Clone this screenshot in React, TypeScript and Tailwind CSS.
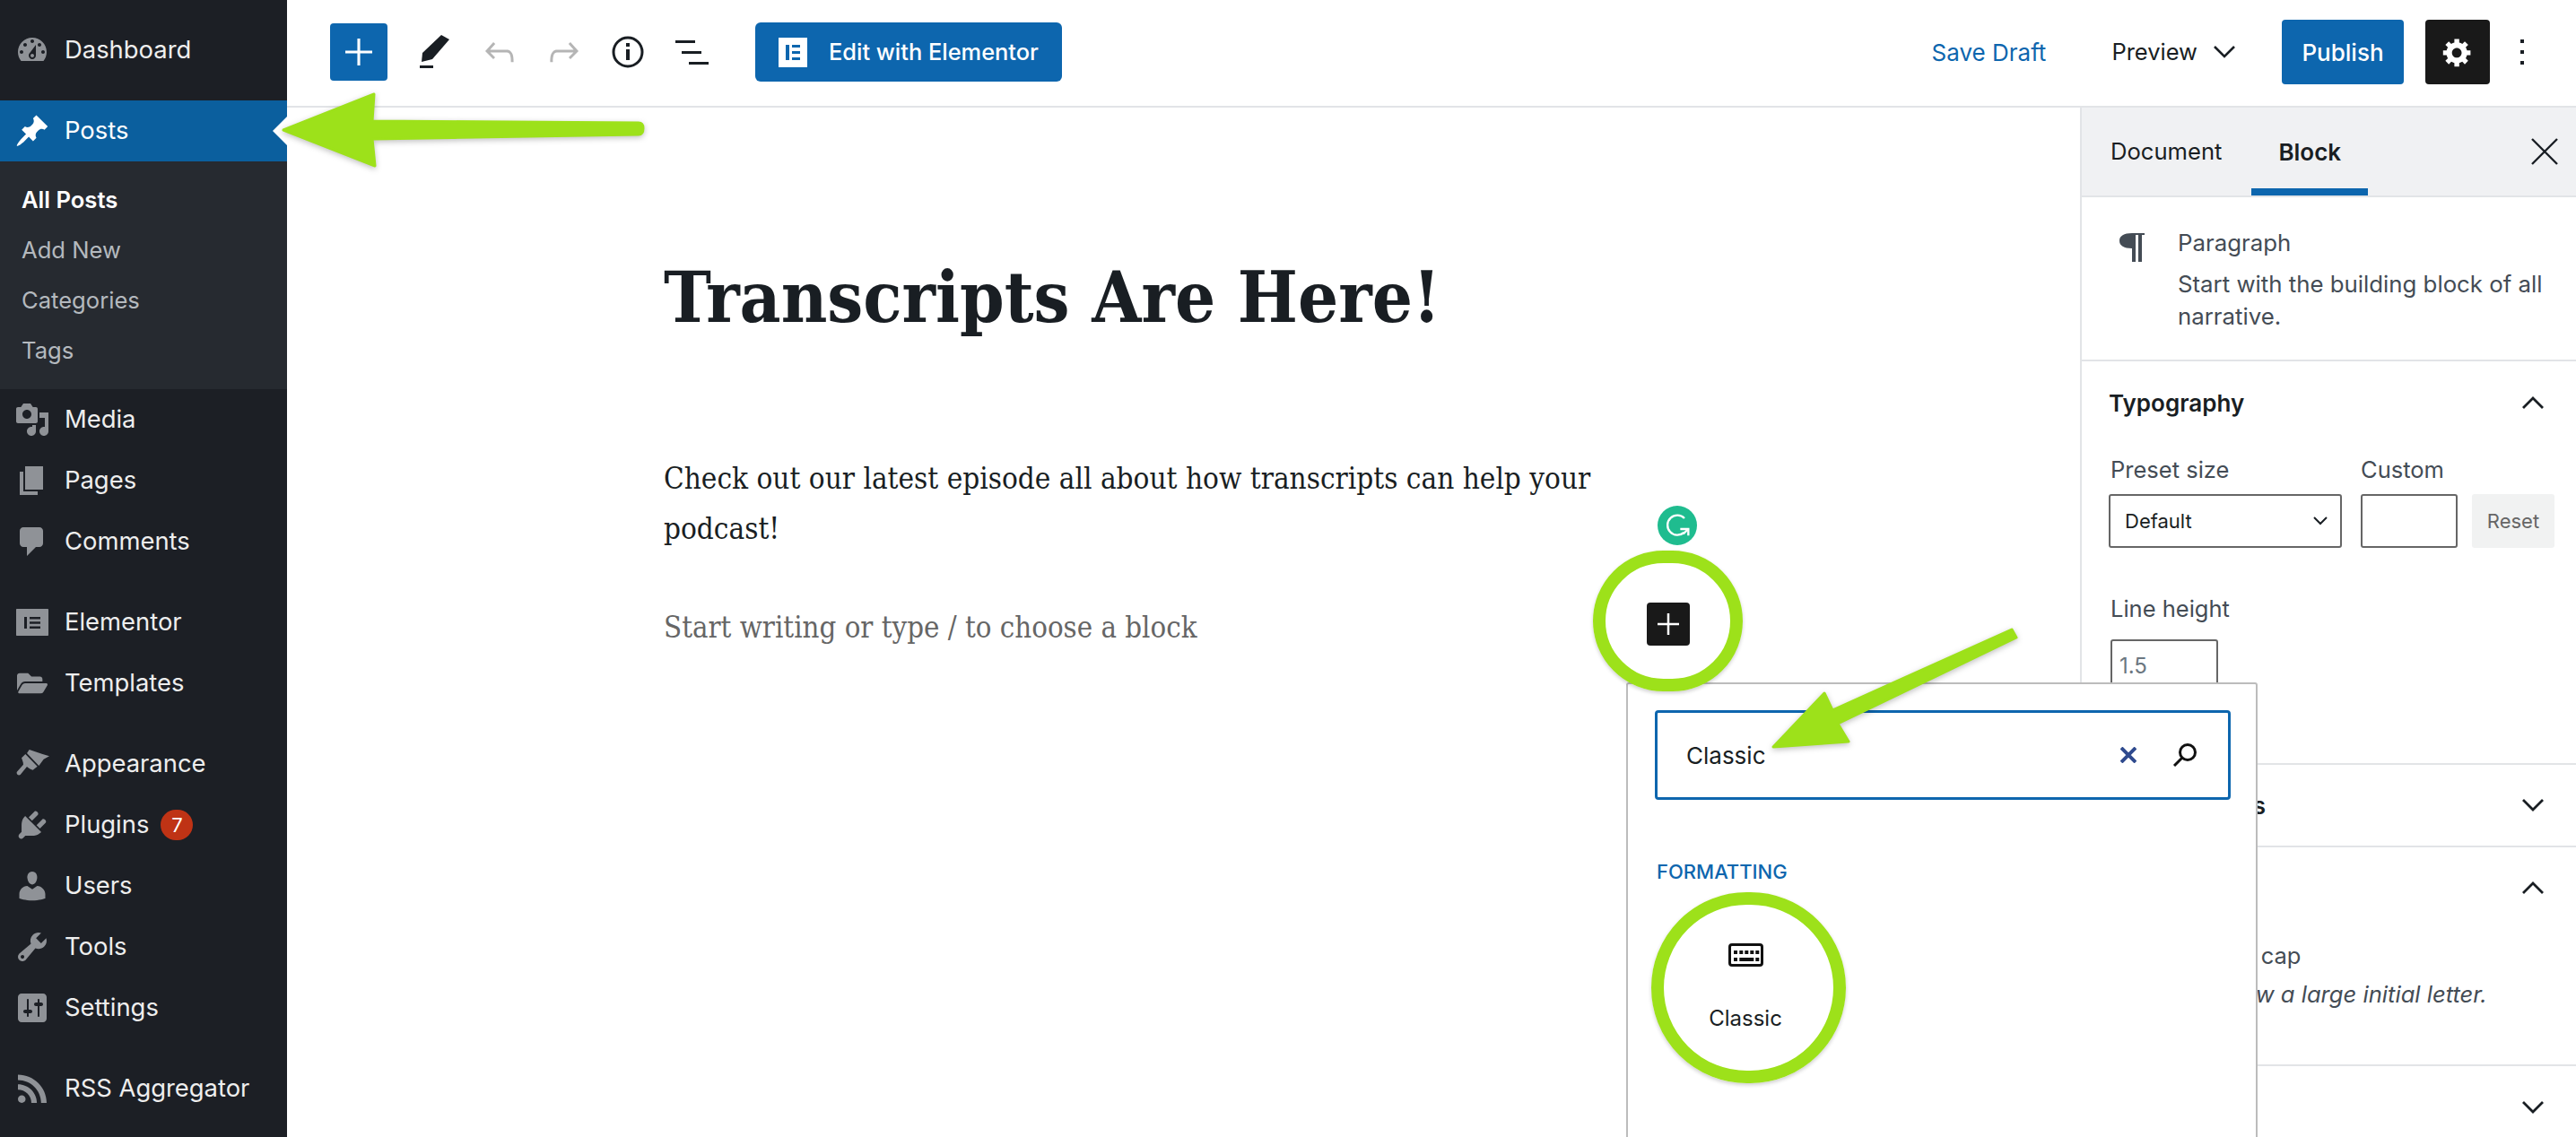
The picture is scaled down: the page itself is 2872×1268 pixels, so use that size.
import React, { FC } from "react";
import { FaFolderOpen } from "react-icons/fa";

const GREEN = "#9de11a";

// dashicons, 20 unit box
const ICONS: Record<string, string> = {
  dashboard:
    "M3.76 16h12.48c1.1-1.37 1.76-3.11 1.76-5 0-4.42-3.58-8-8-8s-8 3.58-8 8c0 1.89.66 3.63 1.76 5zM10 4c.55 0 1 .45 1 1s-.45 1-1 1-1-.45-1-1 .45-1 1-1zM6 6c.55 0 1 .45 1 1s-.45 1-1 1-1-.45-1-1 .45-1 1-1zm8 0c.55 0 1 .45 1 1s-.45 1-1 1-1-.45-1-1 .45-1 1-1zm-5.37 5.55L12 7v6c0 1.1-.9 2-2 2s-2-.9-2-2c0-.57.24-1.08.63-1.45zM4 10c.55 0 1 .45 1 1s-.45 1-1 1-1-.45-1-1 .45-1 1-1zm12 0c.55 0 1 .45 1 1s-.45 1-1 1-1-.45-1-1 .45-1 1-1zm-5 3c0-.55-.45-1-1-1s-1 .45-1 1 .45 1 1 1 1-.45 1-1z",
  pin: "M10.44 3.02l1.82-1.82 6.36 6.35-1.83 1.82c-1.05-.68-2.48-.57-3.41.36l-.75.75c-.92.93-1.04 2.35-.35 3.41l-1.83 1.82-2.41-2.41-2.8 2.79c-.42.42-3.38 2.71-3.8 2.29s1.86-3.39 2.28-3.81l2.79-2.79L4.1 9.36l1.83-1.82c1.05.69 2.48.57 3.4-.36l.75-.75c.93-.92 1.05-2.35.36-3.41z",
  media:
    "M13 11V4c0-.55-.45-1-1-1h-1.67L9 1H5L3.67 3H2c-.55 0-1 .45-1 1v7c0 .55.45 1 1 1h10c.55 0 1-.45 1-1zM7 4.5c1.38 0 2.5 1.12 2.5 2.5S8.38 9.5 7 9.5 4.5 8.38 4.5 7 5.62 4.5 7 4.5zM14 6h5v10.5c0 1.38-1.12 2.5-2.5 2.5S14 17.88 14 16.5s1.12-2.5 2.5-2.5c.17 0 .34.02.5.05V9h-3V6zm-4 8.05V13h2v3.5c0 1.38-1.12 2.5-2.5 2.5S7 17.88 7 16.5 8.12 14 9.5 14c.17 0 .34.02.5.05z",
  pages: "M6 15V2h10v13H6zm-1 1h8v2H3V5h2v11z",
  comments: "M5 2h9c1.1 0 2 .9 2 2v7c0 1.1-.9 2-2 2h-2l-5 5v-5H5c-1.1 0-2-.9-2-2V4c0-1.1.9-2 2-2z",
  elementor:
    "M1.5 2.500h17c.3 0 .5.2.5.5v14c0 .3-.2.5-.5.5h-17c-.3 0-.5-.2-.5-.5V3c0-.3.2-.5.5-.5zM5.500 7v6.500h1.500V7zM8.500 7v1.300H14.500V7zM8.500 9.600v1.300H14.500V9.600zM8.500 12.200v1.300H14.500v-1.300z",
  plugins:
    "M13.11 4.36L9.87 7.6 8 5.73l3.24-3.24c.35-.34 1.05-.2 1.56.32.52.51.66 1.21.31 1.55zm-8 1.77l.91-1.12 9.01 9.01-1.19.84c-.71.71-2.63 1.16-3.82 1.16H6.14L4.9 17.26c-.59.59-1.54.59-2.12 0-.59-.58-.59-1.53 0-2.12l1.24-1.24v-3.88c0-1.13.4-3.19 1.09-3.89zm7.26 3.97l3.24-3.24c.34-.35 1.04-.21 1.55.31.52.51.66 1.21.31 1.55l-3.24 3.25z",
  users:
    "M10 9.25c-2.27 0-2.73-3.44-2.73-3.44C7 4.02 7.82 2 9.97 2c2.16 0 2.98 2.02 2.71 3.81 0 0-.41 3.44-2.68 3.44zm0 2.57L12.72 10c2.39 0 4.52 2.33 4.52 4.53v2.49s-3.65 1.13-7.24 1.13c-3.65 0-7.24-1.13-7.24-1.13v-2.49c0-2.25 1.94-4.48 4.47-4.48z",
  tools:
    "M16.68 9.77c-1.34 1.34-3.3 1.67-4.95.99l-5.41 6.52c-.99.99-2.59.99-3.58 0s-.99-2.59 0-3.57l6.52-5.42c-.68-1.65-.35-3.61.99-4.95 1.28-1.28 3.12-1.62 4.72-1.06l-2.89 2.89 2.82 2.82 2.86-2.87c.53 1.58.18 3.39-1.08 4.65zM3.81 16.21c.4.39 1.04.39 1.43 0 .4-.4.4-1.04 0-1.43-.39-.4-1.03-.4-1.43 0-.39.39-.39 1.03 0 1.43z",
  settings:
    "M18 16V4c0-1.1-.9-2-2-2H4c-1.1 0-2 .9-2 2v12c0 1.1.9 2 2 2h12c1.1 0 2-.9 2-2zM8 11h1c.55 0 1 .45 1 1s-.45 1-1 1H8v1.5c0 .28-.22.5-.5.5s-.5-.22-.5-.5V13H6c-.55 0-1-.45-1-1s.45-1 1-1h1V5.5c0-.28.22-.5.5-.5s.5.22.5.5V11zm5-2h-1c-.55 0-1-.45-1-1s.45-1 1-1h1V5.5c0-.28.22-.5.5-.5s.5.22.5.5V7h1c.55 0 1 .45 1 1s-.45 1-1 1h-1v5.5c0 .28-.22.5-.5.5s-.5-.22-.5-.5V9z",
  rss: "M14.92 18H18C18 9.32 10.82 2.25 2 2.25v3.02c7.12 0 12.92 5.71 12.92 12.73zm-5.44 0h3.08C12.56 12.27 7.82 7.6 2 7.6v3.02c2 0 3.87.77 5.29 2.16C8.7 14.17 9.48 16.03 9.48 18zm-5.35-.02c1.17 0 2.13-.93 2.13-2.09 0-1.15-.96-2.09-2.13-2.09-1.18 0-2.13.94-2.13 2.09 0 1.16.95 2.09 2.13 2.09z",
  gear: "M18 12h-2.18c-.17.7-.44 1.35-.81 1.93l1.54 1.54-2.1 2.1-1.54-1.54c-.58.36-1.23.63-1.91.79V19H8v-2.18c-.68-.16-1.33-.43-1.91-.79l-1.54 1.54-2.12-2.12 1.54-1.54c-.36-.58-.63-1.23-.79-1.91H1V9.03h2.17c.16-.7.44-1.35.8-1.94L2.43 5.55l2.1-2.1 1.54 1.54c.58-.37 1.24-.64 1.93-.81V2h3v2.18c.68.16 1.33.43 1.91.79l1.54-1.54 2.12 2.12-1.54 1.54c.36.59.64 1.24.8 1.94H18V12zm-8.5 1.5c1.66 0 3-1.34 3-3s-1.34-3-3-3-3 1.34-3 3 1.34 3 3 3z",
};

const Dash: FC<{ name: string; className?: string }> = ({ name, className }) => (
  <svg viewBox="0 0 20 20" fill="currentColor" fillRule="evenodd" className={className}>
    <path d={ICONS[name]} />
  </svg>
);

const BrushIcon = () => (
  <svg viewBox="18 6 120 120" fill="currentColor" className="h-10 w-10">
    <path d="M68 18L110 32L135 40L116 50L100 72L60 30Z" />
    <path d="M55 33L95 74L80 86C70 84 65 78 60 75L38 102C32 106 24 100 26 93L48 68C48 60 44 52 42 46Z" />
  </svg>
);

const MenuIcon: FC<{ icon: string }> = ({ icon }) => {
  if (icon === "folder") return <FaFolderOpen className="h-[34px] w-[34px]" />;
  if (icon === "appearance") return <BrushIcon />;
  return <Dash name={icon} className="h-10 w-10" />;
};

const MenuRow: FC<{ icon: string; label: string; badge?: string; gap?: boolean }> = ({ icon, label, badge, gap }) => (
  <div className={`flex h-[68px] items-center pl-4 text-[27.4px] text-[#eeeeee] ${gap ? "mt-[22px]" : ""}`}>
    <span className="flex h-10 w-10 items-center justify-center text-[#8f9297]">
      <MenuIcon icon={icon} />
    </span>
    <span className="ml-4">{label}</span>
    {badge && (
      <span className="ml-[13px] flex h-[34px] w-9 items-center justify-center rounded-full bg-[#bf3315] text-[22px] leading-none text-white">
        {badge}
      </span>
    )}
  </div>
);

const Sidebar = () => (
  <aside className="h-full w-[320px] shrink-0 bg-[#1c1f25]">
    <div className="flex h-[112px] items-center pl-4 text-[27.4px] text-[#eeeeee]">
      <Dash name="dashboard" className="h-10 w-10 text-[#8f9297]" />
      <span className="ml-4">Dashboard</span>
    </div>
    <div className="flex h-[68px] items-center bg-[#0b5f9e] pl-4 text-[27.4px] text-white">
      <Dash name="pin" className="h-10 w-10" />
      <span className="ml-4">Posts</span>
    </div>
    <div className="h-[254px] bg-[#262a30] pt-[15px] pl-6 text-[25.6px] text-[#b4b9be]">
      <div className="flex h-14 items-center font-semibold text-white">All Posts</div>
      <div className="flex h-14 items-center">Add New</div>
      <div className="flex h-14 items-center">Categories</div>
      <div className="flex h-14 items-center">Tags</div>
    </div>
    <MenuRow icon="media" label="Media" />
    <MenuRow icon="pages" label="Pages" />
    <MenuRow icon="comments" label="Comments" />
    <MenuRow icon="elementor" label="Elementor" gap />
    <MenuRow icon="folder" label="Templates" />
    <MenuRow icon="appearance" label="Appearance" gap />
    <MenuRow icon="plugins" label="Plugins" badge="7" />
    <MenuRow icon="users" label="Users" />
    <MenuRow icon="tools" label="Tools" />
    <MenuRow icon="settings" label="Settings" />
    <MenuRow icon="rss" label="RSS Aggregator" gap />
  </aside>
);

const Plus: FC<{ size: number; width?: number }> = ({ size, width = 2.5 }) => (
  <svg width={size} height={size} viewBox="0 0 24 24" stroke="#fff" strokeWidth={width}>
    <path d="M12 0v24M0 12h24" />
  </svg>
);

const UNDO =
  "M18.3 11.7c-.6-.6-1.4-.9-2.3-.9H6.7l2.9-3.3-1.1-1-4.5 5L8.5 16l1-1-2.7-2.7H16c.5 0 .9.2 1.3.5 1 1 1 3.4 1 4.5v.3h1.5v-.2c0-1.5 0-4.3-1.5-5.7z";

const TopBar = () => (
  <header className="flex h-[120px] shrink-0 items-center border-b-2 border-[#e2e4e7] pb-[2px] pl-12 pr-[58px]">
    <button className="flex h-16 w-16 items-center justify-center rounded bg-[#0d66ae]">
      <Plus size={30} />
    </button>
    <svg viewBox="0 0 33 38" className="ml-9 h-[38px] w-[33px]" fill="#191e23">
      <path d="M24 0l9 5-19 22-12 3 1-10z" />
      <rect x="0" y="34" width="15" height="3" />
    </svg>
    <svg viewBox="0 0 24 24" fill="#b5b5b5" className="ml-[32px] h-12 w-12">
      <path d={UNDO} />
    </svg>
    <svg viewBox="0 0 24 24" fill="#b5b5b5" className="ml-[24px] h-12 w-12 -scale-x-100">
      <path d={UNDO} />
    </svg>
    <svg viewBox="0 0 36 36" className="ml-[29px] h-9 w-9" fill="none" stroke="#191e23" strokeWidth="3">
      <circle cx="18" cy="18" r="16" />
      <path d="M18 15v12" strokeWidth="4" />
      <path d="M18 8v4" strokeWidth="4" />
    </svg>
    <svg viewBox="0 0 37 27" className="ml-[35px] h-[27px] w-[37px]" fill="#191e23">
      <rect x="0" y="0" width="22" height="3" />
      <rect x="7" y="12" width="22" height="3" />
      <rect x="15" y="24" width="22" height="3" />
    </svg>
    <button className="ml-[52px] flex h-[66px] w-[342px] items-center rounded-md bg-[#0d66ae] pl-[26px] text-[25.4px] font-medium text-white">
      <svg viewBox="0 0 32 33" className="h-[33px] w-8">
        <path
          fill="#fff"
          fillRule="evenodd"
          d="M0 0h32v33H0zM8 8v17h4V8zM15 8v3h9V8zM15 15v3h9v-3zM15 22v3h9v-3z"
        />
      </svg>
      <span className="ml-6">Edit with Elementor</span>
    </button>
    <span className="ml-auto text-[26px] text-[#0d66ae]">Save Draft</span>
    <span className="ml-[73px] text-[25.5px] text-[#191e23]">Preview</span>
    <svg viewBox="0 0 24 14" className="ml-[18px] h-[14px] w-6" fill="none" stroke="#191e23" strokeWidth="2.6">
      <path d="M1 1l11 11L23 1" />
    </svg>
    <button className="ml-[52px] flex h-[72px] w-[136px] items-center justify-center rounded bg-[#0d66ae] text-[26px] font-medium text-white">
      Publish
    </button>
    <button className="ml-6 flex h-[72px] w-[72px] items-center justify-center rounded bg-[#191919] text-white">
      <Dash name="gear" className="h-9 w-9" />
    </button>
    <svg viewBox="0 0 4 28" className="ml-[34px] h-7 w-1" fill="#191e23">
      <rect y="0" width="4" height="4" />
      <rect y="12" width="4" height="4" />
      <rect y="24" width="4" height="4" />
    </svg>
  </header>
);

const Editor = () => (
  <main className="flex-1 pl-[420px] pt-[160px] text-[#191e23]" style={{ fontFamily: "'DejaVu Serif Condensed', 'DejaVu Serif', serif" }}>
    <h1 className="text-[79px] font-bold leading-[104px]">Transcripts Are Here!</h1>
    <p className="mt-[122px] w-[1060px] text-[33px] leading-[56px]">
      Check out our latest episode all about how transcripts can help your podcast!
    </p>
    <p className="mt-[54px] text-[32.7px] leading-[57px] text-[#666666]">Start writing or type / to choose a block</p>
  </main>
);

const Chevron: FC<{ up?: boolean }> = ({ up }) => (
  <svg viewBox="0 0 24 14" fill="none" stroke="#191e23" strokeWidth="2.8" className={`h-[14px] w-6 ${up ? "rotate-180" : ""}`}>
    <path d="M1 1l11 11L23 1" />
  </svg>
);

const Panel = () => (
  <section className="h-full w-[553px] shrink-0 border-l-2 border-[#e2e4e7] text-[#444c55]">
    <div className="relative flex h-[100px] items-center border-b-2 border-[#e2e4e7] bg-[#f0f1f3] pl-8 text-[25.6px] text-[#191e23]">
      <span>Document</span>
      <span className="ml-[63px] text-[26px] font-semibold">Block</span>
      <span className="absolute bottom-0 left-[189px] h-2 w-[130px] bg-[#0d66ae]" />
      <svg viewBox="0 0 30 30" className="ml-auto mr-[20px] h-[30px] w-[30px]" stroke="#191e23" strokeWidth="2.4">
        <path d="M1 1l28 28M29 1L1 29" />
      </svg>
    </div>
    <div className="flex h-[183px] border-b-2 border-[#e2e4e7] pl-[42px] pt-[33px] text-[25.8px] leading-9">
      <svg viewBox="0 0 28 32" className="mt-[7px] h-8 w-7" fill="#444c55">
        <path d="M14 0h14v2h-3v30h-4V2h-3v30h-4V17C5 17 0 14 0 8.500S5 0 14 0z" />
      </svg>
      <div className="ml-[37px] w-[440px]">
        <div>Paragraph</div>
        <div className="mt-[10px]">Start with the building block of all narrative.</div>
      </div>
    </div>
    <div className="h-[450px] border-b-2 border-[#e2e4e7] pl-[30px] pr-6">
      <div className="flex h-[92px] items-center justify-between pr-[12px] text-[26px] font-semibold text-[#191e23]">
        Typography
        <Chevron up />
      </div>
      <div className="flex gap-[21px] text-[25.5px]">
        <div className="w-[260px]">
          <div className="h-[56px] pl-[2px] pt-[11px] leading-9">Preset size</div>
          <div className="flex h-[60px] items-center justify-between rounded-[3px] border-2 border-[#666666] pl-4 pr-[14px] text-[22px] text-[#191e23]">
            Default
            <svg viewBox="0 0 16 10" fill="none" stroke="#191e23" strokeWidth="2" className="h-[10px] w-4">
              <path d="M1 1l7 7 7-7" />
            </svg>
          </div>
        </div>
        <div className="w-[108px]">
          <div className="h-[56px] pt-[11px] leading-9">Custom</div>
          <div className="h-[60px] rounded-[3px] border-2 border-[#666666]" />
        </div>
        <div className="-ml-[5px] mt-[56px] flex h-[60px] w-[92px] items-center justify-center rounded-[3px] bg-[#f1f2f2] text-[22px] text-[#666666]">
          Reset
        </div>
      </div>
      <div className="mt-[50px] pl-[2px] text-[25.5px] leading-9">Line height</div>
      <div className="ml-[2px] mt-[16px] flex h-[60px] w-[120px] items-center rounded-[3px] border-2 border-[#666666] pl-2 text-[24px] text-[#6c7781]">
        1.5
      </div>
    </div>
    <div className="flex h-[92px] items-center justify-between border-b-2 border-[#e2e4e7] pl-[30px] pr-9 text-[26px] font-semibold text-[#191e23]">
      Color settings
      <Chevron />
    </div>
    <div className="h-[244px] border-b-2 border-[#e2e4e7] pl-[30px] pr-9">
      <div className="flex h-[90px] items-center justify-between text-[26px] font-semibold text-[#191e23]">
        Text settings
        <Chevron up />
      </div>
      <div className="mt-[13px] flex items-center text-[25.5px] leading-9">
        <span className="w-[104px]" />
        Drop cap
      </div>
      <div className="mt-[7px] text-[25.6px] italic leading-9">Toggle to show a large initial letter.</div>
    </div>
    <div className="flex h-[92px] items-center justify-between pl-[30px] pr-9 text-[26px] font-semibold text-[#191e23]">
      Advanced
      <Chevron />
    </div>
  </section>
);

const Inserter = () => (
  <div className="absolute left-[1813px] top-[761px] h-[520px] w-[704px] rounded-t-[3px] border-2 border-[#bcbcbc] bg-white pl-[30px] pr-[28px] pt-[29px]">
    <div className="flex h-[100px] items-center rounded-[4px] border-[3px] border-[#0d66ae] pl-[32px] pr-[34px] text-[26px] text-[#191e23]">
      Classic
      <svg viewBox="0 0 18 18" className="ml-auto h-[18px] w-[18px]" stroke="#2f4a8e" strokeWidth="4">
        <path d="M1 1l16 16M17 1L1 17" />
      </svg>
      <svg viewBox="0 0 28 26" className="ml-10 h-[26px] w-7" fill="none" stroke="#111" strokeWidth="3">
        <circle cx="17" cy="10" r="8.500" />
        <path d="M11 16L2 25" />
      </svg>
    </div>
    <div className="ml-[2px] mt-[66px] text-[22px] font-medium leading-7 text-[#0d66ae]">FORMATTING</div>
    <div className="ml-[17px] mt-[66px] flex w-[168px] flex-col items-center text-[24px] text-[#191e23]">
      <svg viewBox="0 0 39 26" className="h-[26px] w-[39px]" fill="#111">
        <path
          fillRule="evenodd"
          d="M4 0h31a4 4 0 014 4v18a4 4 0 01-4 4H4a4 4 0 01-4-4V4a4 4 0 014-4zM4 3a1 1 0 00-1 1v18a1 1 0 001 1h31a1 1 0 001-1V4a1 1 0 00-1-1z"
        />
        <path d="M6 8h4v4H6zM12.300 8h4v4h-4zM18.300 8h4v4h-4zM24.300 8h4v4h-4zM30.300 8h4v4h-4zM6 16h4v4H6zM12.300 16h16v4h-16zM30.300 16h4v4h-4z" />
      </svg>
      <span className="mt-[40px]">Classic</span>
    </div>
  </div>
);

const Callouts = () => (
  <>
    <div className="absolute left-[304px] top-[130px] h-0 w-0 border-y-[16px] border-r-[16px] border-y-transparent border-r-white" />
    <svg className="absolute left-[310px] top-[100px] drop-shadow-[0_2px_3px_rgba(0,0,0,0.25)]" width="412" height="90" viewBox="310 100 412 90" fill={GREEN}>
      <path
        d="M316 145L417 105L415 135L712 137Q717 137 717 143Q717 150 712 150L415 155L418 185Z"
        stroke={GREEN}
        strokeWidth="3"
        strokeLinejoin="round"
      />
    </svg>
    <svg className="absolute left-[1970px] top-[698px] drop-shadow-[0_2px_3px_rgba(0,0,0,0.25)]" width="282" height="142" viewBox="1970 698 282 142" fill={GREEN}>
      <path
        d="M1977 833L2034 773L2043 792L2243 702L2248 711L2049 807L2061 827Z"
        stroke={GREEN}
        strokeWidth="3"
        strokeLinejoin="round"
      />
    </svg>
    <div className="absolute left-[1776px] top-[614px] h-[157px] w-[167px] rounded-full border-[14px] border-[#9de11a] shadow-[0_2px_4px_rgba(0,0,0,0.2)]" />
    <div className="absolute left-[1841px] top-[995px] h-[213px] w-[217px] rounded-full border-[14px] border-[#9de11a] shadow-[0_2px_4px_rgba(0,0,0,0.2)]" />
  </>
);

export default function App() {
  return (
    <div
      className="relative flex h-[1268px] w-[2872px] overflow-hidden bg-white"
      style={{ fontFamily: "Inter, 'Noto Sans', sans-serif" }}
    >
      <Sidebar />
      <div className="flex min-w-0 flex-1 flex-col">
        <TopBar />
        <div className="flex min-h-0 flex-1">
          <Editor />
          <Panel />
        </div>
      </div>

      {/* Grammarly badge and the floating block button */}
      <div className="absolute left-[1848px] top-[564px] h-11 w-11 rounded-full bg-[#1fbc8f]">
        <svg viewBox="24 24 132 132" className="h-11 w-11" fill="none" stroke="#fff" strokeWidth="7">
          <path d="M114 66A33 33 0 1 0 112 114" />
          <path d="M100 102H127V124" />
          <path d="M127 102L110 118" />
        </svg>
      </div>
      <div className="absolute left-[1836px] top-[672px] flex h-12 w-12 items-center justify-center rounded bg-[#191919]">
        <Plus size={24} />
      </div>

      <Inserter />
      <Callouts />
    </div>
  );
}
